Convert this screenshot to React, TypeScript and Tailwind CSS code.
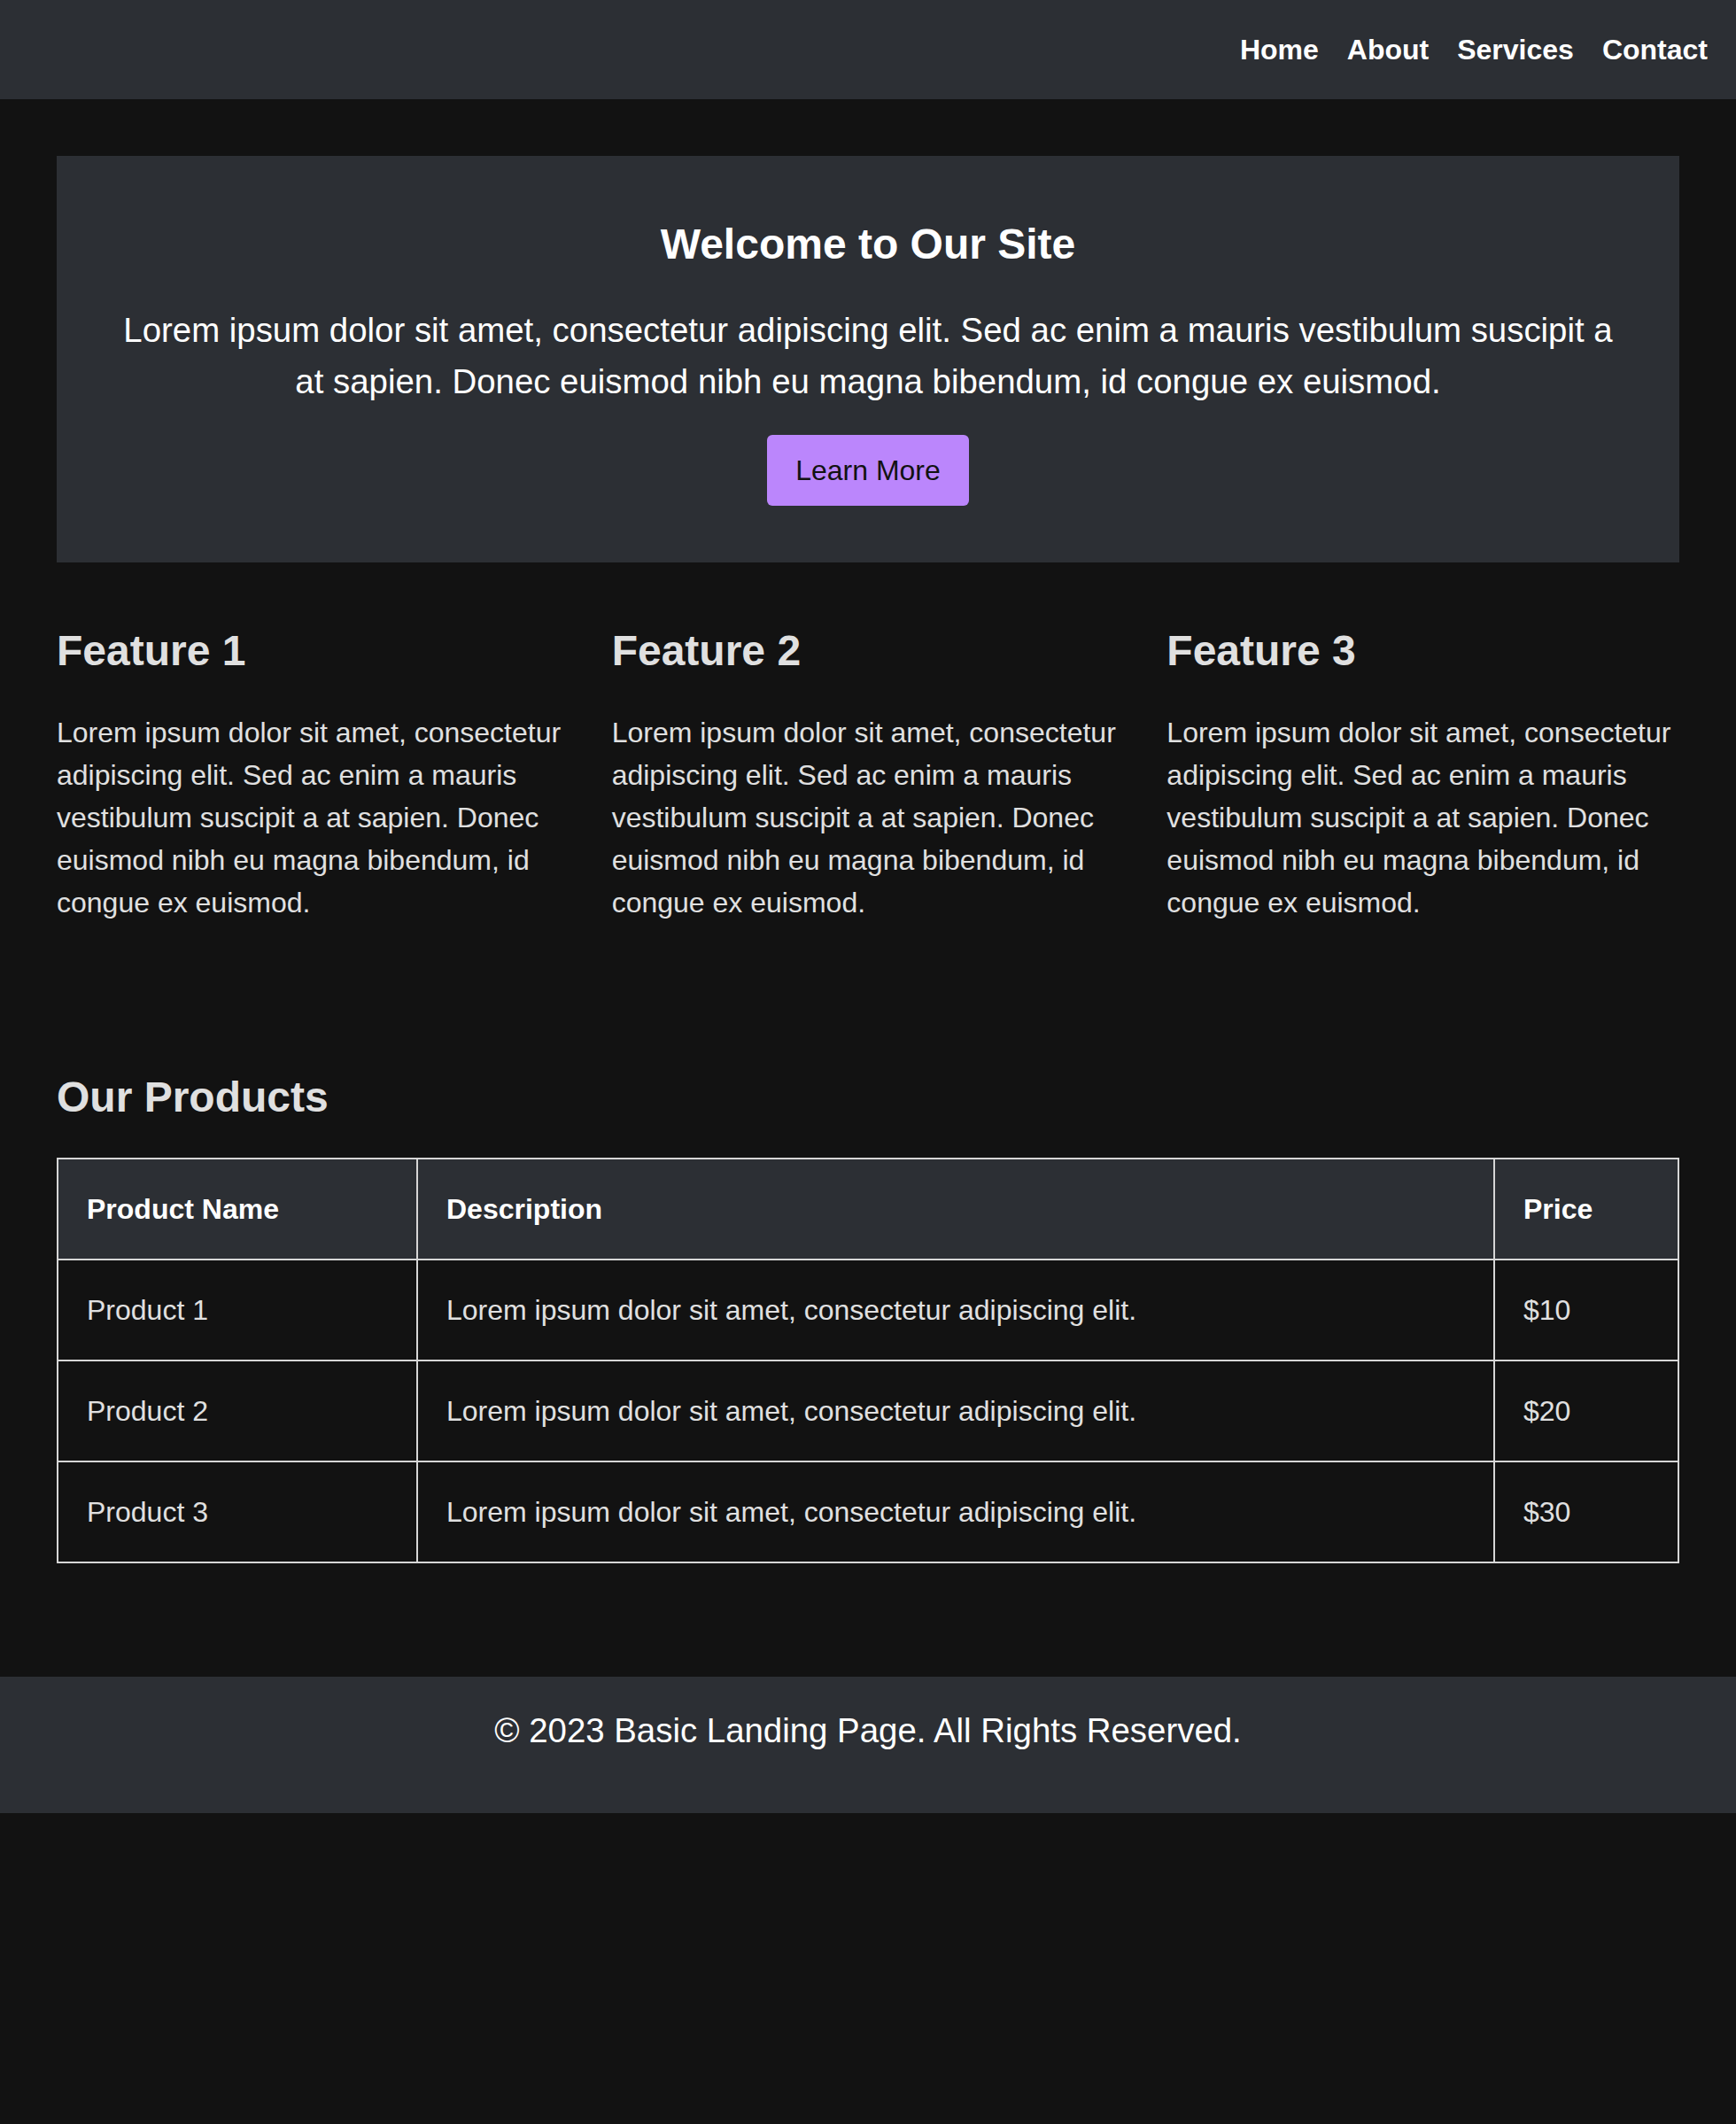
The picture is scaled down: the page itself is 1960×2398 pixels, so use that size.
import React from "react";

const lorem =
  "Lorem ipsum dolor sit amet, consectetur adipiscing elit. Sed ac enim a mauris vestibulum suscipit a at sapien. Donec euismod nibh eu magna bibendum, id congue ex euismod.";

const products = [
  { name: "Product 1", price: "$10" },
  { name: "Product 2", price: "$20" },
  { name: "Product 3", price: "$30" },
];

export default function App() {
  return (
    <div className="min-h-screen bg-[#121212] font-['Liberation_Sans',Arial,sans-serif] text-[#e0e0e0]">
      <header className="flex justify-end bg-[#2c2f34] p-8">
        <nav>
          <ul className="flex gap-8">
            {["Home", "About", "Services", "Contact"].map((item) => (
              <li key={item}>
                <a href="#" className="text-[32px] font-bold leading-[48px] text-white">
                  {item}
                </a>
              </li>
            ))}
          </ul>
        </nav>
      </header>

      <main className="px-16 pt-16 pb-32">
        <section className="bg-[#2c2f34] p-16 text-center text-white">
          <h1 className="mb-8 text-[48px] font-bold leading-[72px]">Welcome to Our Site</h1>
          <p className="mb-8 text-[38.4px] leading-[57.6px]">{lorem}</p>
          <button className="rounded-[6px] bg-[#bb86fc] px-8 py-4 text-[32px] leading-[48px] text-[#121212]">
            Learn More
          </button>
        </section>

        <section className="mt-16 grid grid-cols-3 gap-x-12">
          {[1, 2, 3].map((n) => (
            <div key={n}>
              <h2 className="mb-8 text-[48px] font-bold leading-[72px]">Feature {n}</h2>
              <p className="text-[32px] leading-[48px]">{lorem}</p>
            </div>
          ))}
        </section>

        <section className="mt-[160px]">
          <h2 className="mb-8 text-[48px] font-bold leading-[72px]">Our Products</h2>
          <table className="w-full table-fixed border-collapse border-2 border-[#d6d6d6] text-left text-[32px] leading-[48px]">
            <colgroup>
              <col className="w-[406px]" />
              <col />
              <col className="w-[208px]" />
            </colgroup>
            <thead>
              <tr className="bg-[#2c2f34] text-white">
                <th className="border-2 border-[#d6d6d6] p-8 font-bold">Product Name</th>
                <th className="border-2 border-[#d6d6d6] p-8 font-bold">Description</th>
                <th className="border-2 border-[#d6d6d6] p-8 font-bold">Price</th>
              </tr>
            </thead>
            <tbody>
              {products.map((p) => (
                <tr key={p.name}>
                  <td className="border-2 border-[#d6d6d6] p-8">{p.name}</td>
                  <td className="border-2 border-[#d6d6d6] p-8">
                    Lorem ipsum dolor sit amet, consectetur adipiscing elit.
                  </td>
                  <td className="border-2 border-[#d6d6d6] p-8">{p.price}</td>
                </tr>
              ))}
            </tbody>
          </table>
        </section>
      </main>

      <footer className="bg-[#2c2f34] pt-8 pb-16 text-center text-[38.4px] leading-[57.6px] text-white">
        <p>© 2023 Basic Landing Page. All Rights Reserved.</p>
      </footer>
    </div>
  );
}
